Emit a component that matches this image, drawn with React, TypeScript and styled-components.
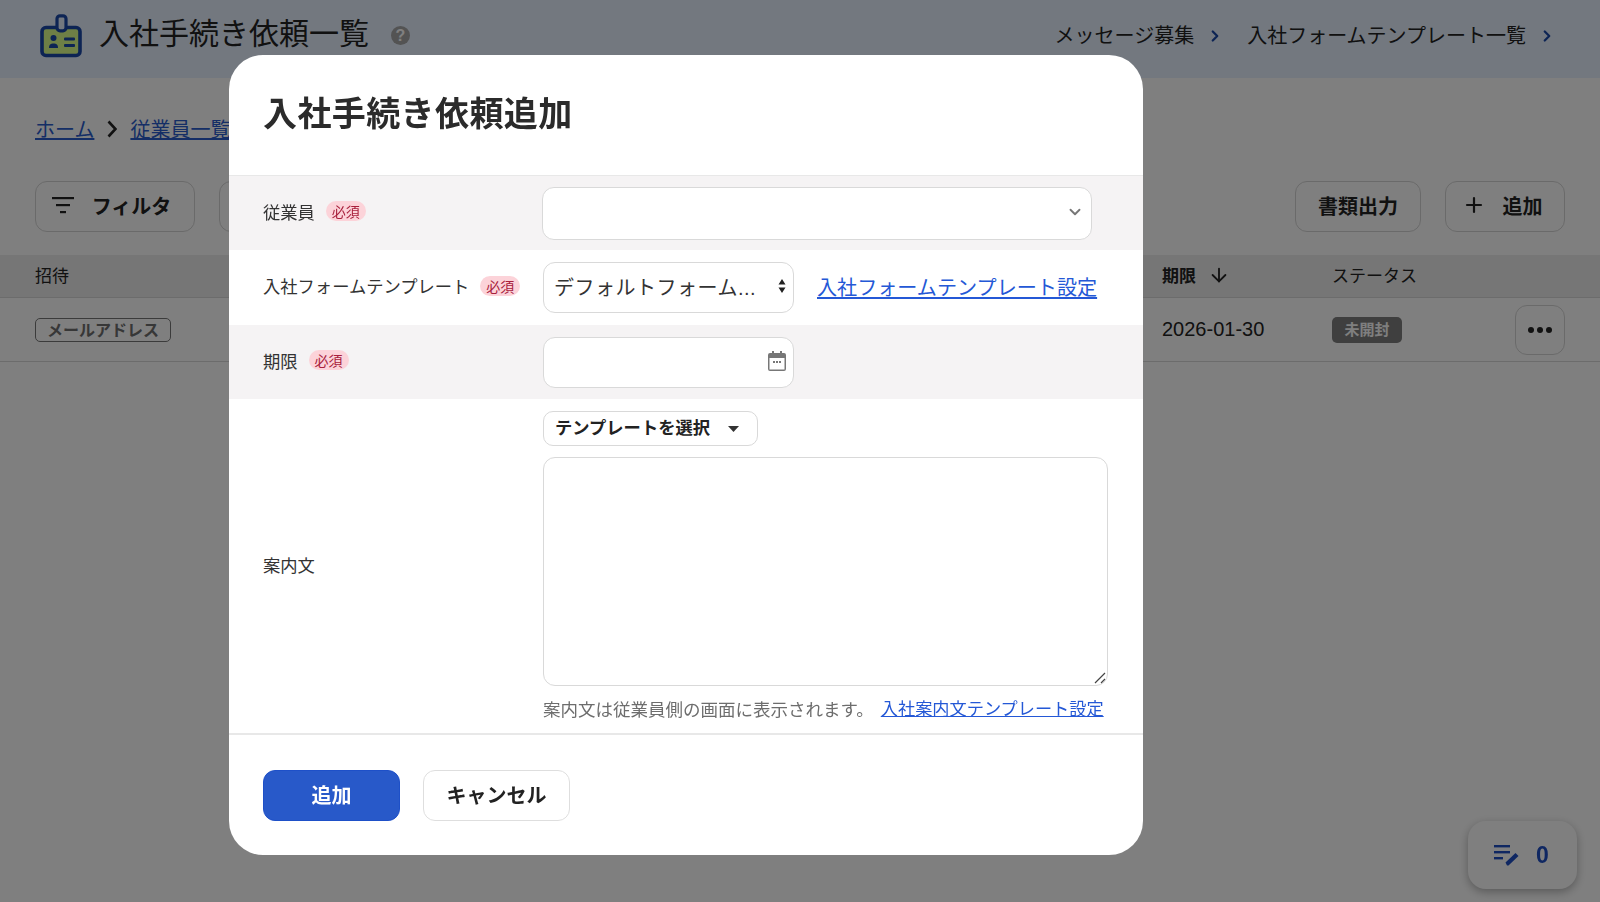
import React from "react";
import styled, { createGlobalStyle } from "styled-components";
import { ChevronRight, ChevronDown, ArrowDown, Plus } from "lucide-react";

const JP = `"Liberation Sans", "Noto Sans CJK JP", sans-serif`;

const GlobalStyle = createGlobalStyle`
  html, body {
    margin: 0;
    height: 100%;
    overflow: hidden;
    background: #fff;
    font-family: ${JP};
    color: #222;
  }
  * { box-sizing: border-box; }
`;

const Page = styled.div`
  width: 1600px;
  height: 902px;
`;

const TopBar = styled.header`
  height: 78px;
  background: #e6f0ff;
  display: flex;
  align-items: center;
  justify-content: space-between;
  padding: 0 44px 7px 40px;
`;

const TitleGroup = styled.div`
  display: flex;
  align-items: center;
`;

const PageTitle = styled.h1`
  margin: 0 22px 0 15px;
  padding-bottom: 3px;
  font-size: 30px;
  font-weight: 400;
  line-height: 1;
`;

const HelpDot = styled.span`
  width: 19px;
  height: 19px;
  border-radius: 50%;
  background: #a6a6a6;
  color: #fff;
  font-size: 16px;
  font-weight: 700;
  display: flex;
  align-items: center;
  justify-content: center;
`;

const TopLinks = styled.nav`
  display: flex;
  align-items: center;
  gap: 23px;
`;

const TopLink = styled.span`
  display: flex;
  align-items: center;
  gap: 12px;
  padding-bottom: 3px;
  font-size: 20px;
  color: #222;
  & svg { color: #1a48a8; margin-top: 3px; }
`;

const Crumbs = styled.div`
  display: flex;
  align-items: center;
  gap: 13px;
  padding: 0 35px 2px;
  height: 103px;
  font-size: 20px;
`;

const CrumbLink = styled.a`
  color: #2a5ccc;
  text-decoration: underline;
`;

const Toolbar = styled.div`
  display: flex;
  justify-content: space-between;
  padding: 0 35px;
  height: 74px;
`;

const ToolGroup = styled.div`
  display: flex;
  gap: 24px;
`;

const ToolButton = styled.div<{ $w: number; $shift?: number }>`
  width: ${(p) => p.$w}px;
  height: 51px;
  border: 1px solid #d4d4d4;
  border-radius: 12px;
  background: #fff;
  display: flex;
  align-items: center;
  justify-content: center;
  gap: 17px;
  padding: 0 ${(p) => p.$shift ?? 0}px 3px 0;
  font-size: 20px;
  font-weight: 700;
`;

const TableHead = styled.div`
  height: 43px;
  background: #ececec;
  border-bottom: 1px solid #d8d8d8;
  display: grid;
  grid-template-columns: 1127px 170px 1fr;
  align-items: center;
  padding: 0 0 3px 35px;
  font-size: 17px;
`;

const HeadCell = styled.div<{ $bold?: boolean }>`
  display: flex;
  align-items: center;
  gap: 12px;
  font-weight: ${(p) => (p.$bold ? 700 : 400)};
`;

const TableRow = styled.div`
  height: 64px;
  border-bottom: 1px solid #d8d8d8;
  display: grid;
  grid-template-columns: 1127px 170px 1fr;
  align-items: center;
  padding: 0 35px;
  font-size: 20px;
`;

const KindTag = styled.span`
  width: 136px;
  height: 24px;
  border: 1px solid #777;
  border-radius: 5px;
  font-size: 16px;
  font-weight: 700;
  color: #6e6e6e;
  display: flex;
  align-items: center;
  justify-content: center;
  padding-bottom: 2px;
`;

const StatusCell = styled.div`
  display: flex;
  align-items: center;
  justify-content: space-between;
`;

const StatusBadge = styled.span`
  width: 70px;
  height: 26px;
  border-radius: 5px;
  background: #7e7e7e;
  color: #fff;
  font-size: 15px;
  font-weight: 700;
  display: flex;
  align-items: center;
  justify-content: center;
  padding-bottom: 2px;
`;

const MoreButton = styled.div`
  width: 50px;
  height: 50px;
  border: 1px solid #d4d4d4;
  border-radius: 12px;
  display: flex;
  align-items: center;
  justify-content: center;
  gap: 3px;
`;

const Dot = styled.i`
  width: 6px;
  height: 6px;
  border-radius: 50%;
  background: #222;
`;

const DraftCounter = styled.div`
  position: fixed;
  left: 1468px;
  top: 821px;
  width: 109px;
  height: 68px;
  border-radius: 18px;
  background: #fff;
  box-shadow: 0 3px 10px rgba(0, 0, 0, 0.3);
  display: flex;
  align-items: center;
  justify-content: center;
  gap: 15px;
  padding-right: 3px;
  color: #1f4fc4;
  font-size: 23px;
  font-weight: 700;
`;

const Overlay = styled.div`
  position: fixed;
  inset: 0;
  background: rgba(0, 0, 0, 0.5);
  display: flex;
  justify-content: flex-start;
  align-items: flex-start;
  padding: 55px 0 0 229px;
`;

const Modal = styled.div`
  width: 914px;
  height: 800px;
  background: #fff;
  border-radius: 34px;
  overflow: hidden;
  display: flex;
  flex-direction: column;
`;

const ModalHeader = styled.div`
  height: 121px;
  padding: 40px 34px 0;
  border-bottom: 1px solid #e8e8e8;
`;

const ModalTitle = styled.h2`
  margin: 0;
  font-size: 34px;
  letter-spacing: 0.4px;
  line-height: 38px;
  font-weight: 700;
  color: #2b2b2b;
`;

const FormRow = styled.div<{ $shaded?: boolean; $h: number }>`
  height: ${(p) => p.$h}px;
  background: ${(p) => (p.$shaded ? "#f5f3f4" : "#fff")};
  display: grid;
  grid-template-columns: 280px 1fr;
  padding-left: 34px;
  align-items: center;
`;

const Label = styled.div`
  display: flex;
  align-items: center;
  gap: 11px;
  font-size: 17.3px;
  color: #333;
  padding-bottom: 4px;
`;

const Required = styled.span`
  width: 40px;
  height: 20px;
  border-radius: 10px;
  background: #fcd3d9;
  color: #a8203c;
  font-size: 14px;
  display: flex;
  align-items: center;
  justify-content: center;
`;

const Field = styled.div`
  display: flex;
  align-items: center;
  gap: 23px;
`;

const Control = styled.div<{ $w: number; $h: number; $nudge?: number }>`
  width: ${(p) => p.$w}px;
  height: ${(p) => p.$h}px;
  margin-left: ${(p) => p.$nudge ?? 0}px;
  background: #fff;
  border: 1px solid #d9d9d9;
  border-radius: 12px;
  display: flex;
  align-items: center;
  justify-content: space-between;
  padding: 0 7px 3px 10px;
  font-size: 20px;
  letter-spacing: 0.5px;
  color: #333;
`;

const FormLink = styled.a<{ $size: number }>`
  font-size: ${(p) => p.$size}px;
  color: #2458d6;
  text-decoration: underline;
  white-space: nowrap;
  padding-bottom: 2px;
`;

const Stack = styled.div`
  display: flex;
  flex-direction: column;
  align-items: flex-start;
`;

const TemplateMenu = styled.div`
  width: 215px;
  height: 35px;
  border: 1px solid #d9d9d9;
  border-radius: 10px;
  display: flex;
  align-items: center;
  gap: 18px;
  padding: 0 0 3px 11px;
  font-size: 17.3px;
  font-weight: 700;
  color: #222;
  & svg { margin-top: 4px; }
`;

const MessageBox = styled.div`
  position: relative;
  width: 565px;
  height: 229px;
  margin-top: 11px;
  border: 1px solid #d9d9d9;
  border-radius: 12px;
`;

const ResizeGrip = styled.svg`
  position: absolute;
  right: 1px;
  bottom: 1px;
`;

const HelpLine = styled.div`
  display: flex;
  align-items: center;
  gap: 7px;
  margin-top: 9px;
  font-size: 17.5px;
  color: #6d6d6d;
  white-space: nowrap;
`;

const Footer = styled.div`
  flex: 1;
  border-top: 2px solid #e8e8e8;
  display: flex;
  align-items: flex-start;
  gap: 23px;
  padding: 35px 34px 0;
`;

const PrimaryButton = styled.div`
  width: 137px;
  height: 51px;
  border-radius: 12px;
  background: #2859c9;
  border: 1px solid #1e50c8;
  color: #fff;
  font-size: 20px;
  font-weight: 700;
  display: flex;
  align-items: center;
  justify-content: center;
  padding-bottom: 2px;
`;

const CancelButton = styled.div`
  width: 147px;
  height: 51px;
  border-radius: 12px;
  border: 1px solid #dedede;
  color: #222;
  font-size: 20px;
  font-weight: 700;
  display: flex;
  align-items: center;
  justify-content: center;
  padding-bottom: 2px;
`;

const BadgeLogo = () => (
  <svg width="44" height="44" viewBox="0 0 44 44">
    <rect x="2" y="13.5" width="38" height="28" rx="4" fill="#dcff8c" stroke="#1a48a8" strokeWidth="3.6" />
    <rect x="17" y="1.8" width="9" height="15" rx="3" fill="#e6f0ff" stroke="#1a48a8" strokeWidth="3.2" />
    <circle cx="13.5" cy="24" r="3" fill="#1a48a8" />
    <path d="M9 34c0-3.4 1.6-4.5 4.5-4.5s4.5 1.1 4.5 4.5z" fill="#1a48a8" />
    <rect x="24" y="23.5" width="11" height="3" rx="1" fill="#1a48a8" />
    <rect x="24" y="30" width="11" height="3" rx="1" fill="#1a48a8" />
  </svg>
);

const FilterIcon = () => (
  <svg width="24" height="18" viewBox="0 0 24 18">
    <rect x="1" y="1" width="22" height="2.2" fill="#222" />
    <rect x="5" y="8" width="14" height="2.2" fill="#222" />
    <rect x="9" y="15" width="6" height="2.2" fill="#222" />
  </svg>
);

const CrumbChevron = () => (
  <svg width="10" height="18" viewBox="0 0 10 18">
    <path d="M1.5 1.5L8.5 9L1.5 16.5" fill="none" stroke="#222" strokeWidth="2.6" />
  </svg>
);

const ListEditIcon = () => (
  <svg width="28" height="24" viewBox="0 0 28 24">
    <rect x="1" y="2" width="16" height="2.4" fill="#1f4fc4" />
    <rect x="1" y="8" width="16" height="2.4" fill="#1f4fc4" />
    <rect x="1" y="14" width="9" height="2.4" fill="#1f4fc4" />
    <path d="M14 22.5l-1.5-3 10-9.5 3 3-10 9.5z" fill="#1f4fc4" />
  </svg>
);

const SelectArrows = () => (
  <svg width="8" height="16" viewBox="0 0 8 16">
    <path d="M4 1l3.5 5.5h-7zM4 15l3.5-5.5h-7z" fill="#222" />
  </svg>
);

const CalendarIcon = () => (
  <svg width="18" height="20" viewBox="0 0 18 20">
    <path d="M4 0h2v2h6V0h2v2h2a2 2 0 0 1 2 2v14a2 2 0 0 1-2 2H2a2 2 0 0 1-2-2V4a2 2 0 0 1 2-2h2z" fill="#777" />
    <rect x="1.5" y="7" width="15" height="11.5" fill="#fff" />
    <rect x="5" y="10" width="2" height="2" fill="#777" />
    <rect x="8" y="10" width="2" height="2" fill="#777" />
    <rect x="11" y="10" width="2" height="2" fill="#777" />
  </svg>
);

const Caret = () => (
  <svg width="11" height="6" viewBox="0 0 11 6">
    <path d="M0 0h11L5.5 6z" fill="#333" />
  </svg>
);

export default function App() {
  return (
    <Page>
      <GlobalStyle />
      <TopBar>
        <TitleGroup>
          <BadgeLogo />
          <PageTitle>入社手続き依頼一覧</PageTitle>
          <HelpDot>?</HelpDot>
        </TitleGroup>
        <TopLinks>
          <TopLink>
            メッセージ募集
            <ChevronRight size={18} strokeWidth={3} />
          </TopLink>
          <TopLink>
            入社フォームテンプレート一覧
            <ChevronRight size={18} strokeWidth={3} />
          </TopLink>
        </TopLinks>
      </TopBar>
      <Crumbs>
        <CrumbLink>ホーム</CrumbLink>
        <CrumbChevron />
        <CrumbLink>従業員一覧</CrumbLink>
      </Crumbs>
      <Toolbar>
        <ToolGroup>
          <ToolButton $w={160} $shift={8}>
            <FilterIcon />
            フィルタ
          </ToolButton>
          <ToolButton $w={100} />
        </ToolGroup>
        <ToolGroup>
          <ToolButton $w={126}>書類出力</ToolButton>
          <ToolButton $w={120} $shift={6}>
            <Plus size={24} strokeWidth={2.2} />
            追加
          </ToolButton>
        </ToolGroup>
      </Toolbar>
      <TableHead>
        <HeadCell>招待</HeadCell>
        <HeadCell $bold>
          期限
          <ArrowDown size={22} />
        </HeadCell>
        <HeadCell>ステータス</HeadCell>
      </TableHead>
      <TableRow>
        <KindTag>メールアドレス</KindTag>
        <span>2026-01-30</span>
        <StatusCell>
          <StatusBadge>未開封</StatusBadge>
          <MoreButton>
            <Dot />
            <Dot />
            <Dot />
          </MoreButton>
        </StatusCell>
      </TableRow>
      <DraftCounter>
        <ListEditIcon />0
      </DraftCounter>
      <Overlay>
        <Modal>
          <ModalHeader>
            <ModalTitle>入社手続き依頼追加</ModalTitle>
          </ModalHeader>
          <FormRow $shaded $h={74}>
            <Label>
              従業員<Required>必須</Required>
            </Label>
            <Field>
              <Control $w={550} $h={53} $nudge={-1}>
                <span />
                <ChevronDown size={18} color="#777" strokeWidth={2.5} />
              </Control>
            </Field>
          </FormRow>
          <FormRow $h={75}>
            <Label>
              入社フォームテンプレート<Required>必須</Required>
            </Label>
            <Field>
              <Control $w={251} $h={51}>
                デフォルトフォーム...
                <SelectArrows />
              </Control>
              <FormLink $size={20.1}>入社フォームテンプレート設定</FormLink>
            </Field>
          </FormRow>
          <FormRow $shaded $h={74}>
            <Label>
              期限<Required>必須</Required>
            </Label>
            <Field>
              <Control $w={251} $h={51}>
                <span />
                <CalendarIcon />
              </Control>
            </Field>
          </FormRow>
          <FormRow $h={334}>
            <Label>案内文</Label>
            <Stack>
              <TemplateMenu>
                テンプレートを選択
                <Caret />
              </TemplateMenu>
              <MessageBox>
                <ResizeGrip width="12" height="12" viewBox="0 0 12 12">
                  <path d="M11 1L1 11M11 7L7 11" stroke="#444" strokeWidth="1.2" />
                </ResizeGrip>
              </MessageBox>
              <HelpLine>
                案内文は従業員側の画面に表示されます。
                <FormLink $size={17.2}>入社案内文テンプレート設定</FormLink>
              </HelpLine>
            </Stack>
          </FormRow>
          <Footer>
            <PrimaryButton>追加</PrimaryButton>
            <CancelButton>キャンセル</CancelButton>
          </Footer>
        </Modal>
      </Overlay>
    </Page>
  );
}
